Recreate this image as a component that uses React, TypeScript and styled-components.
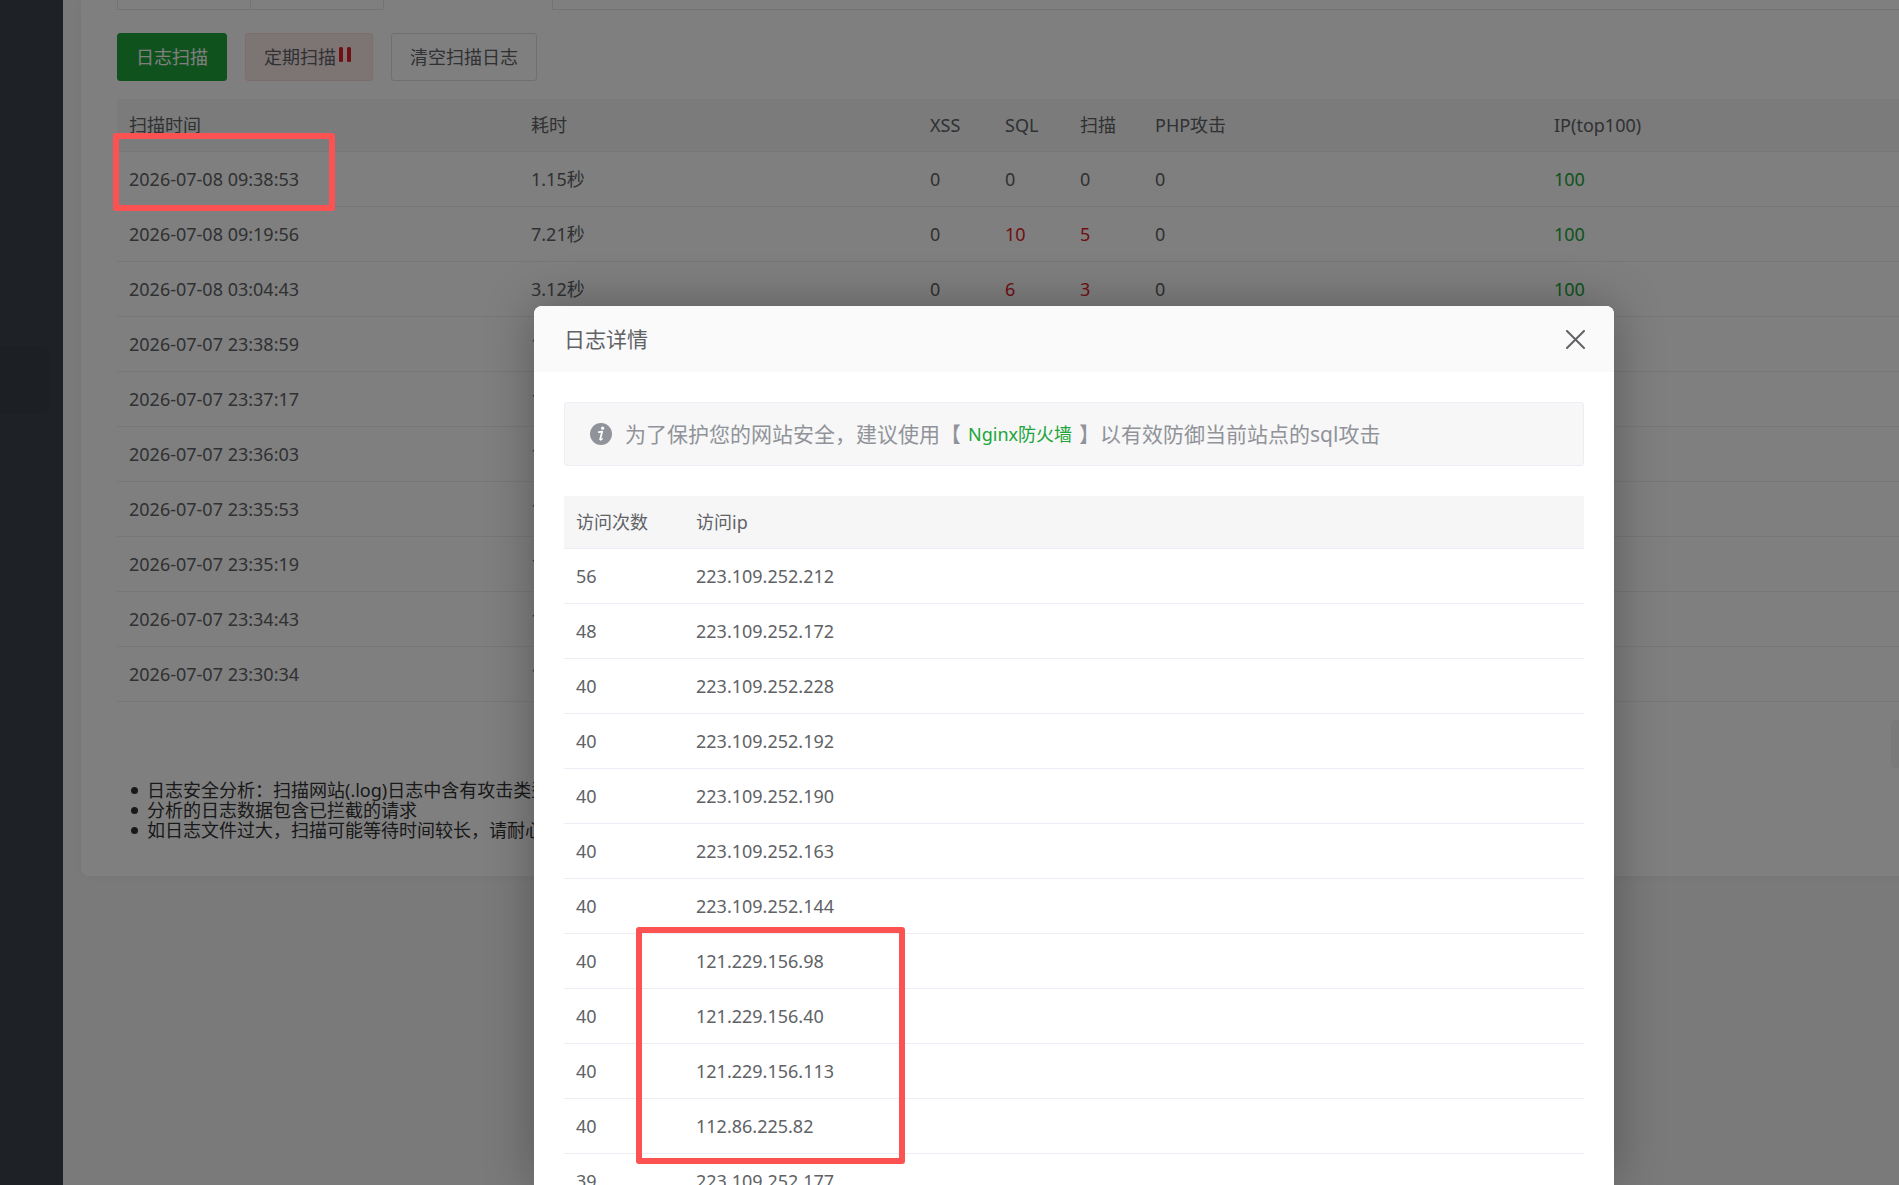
import React from "react";
import styled, { createGlobalStyle } from "styled-components";

const GlobalStyle = createGlobalStyle`
  * {
    box-sizing: border-box;
  }
  html, body, #root {
    height: 100%;
  }
  body {
    margin: 0;
    overflow: hidden;
    background: #f5f5f5;
    color: #606266;
    font-family: "Noto Sans", "Noto Sans CJK SC", sans-serif;
    font-size: 18px;
    line-height: 24px;
  }
  button {
    font: inherit;
    cursor: pointer;
  }
`;

const Page = styled.div`
  position: relative;
  display: flex;
  height: 100vh;
  overflow: hidden;
`;

const Sidebar = styled.nav`
  flex: 0 0 63px;
  padding-top: 346px;
  background: #3c434c;
`;

const SidebarItem = styled.a`
  display: block;
  height: 68px;
  margin-right: 14px;
  border-radius: 0 8px 8px 0;
  background: #394048;
`;

const Main = styled.main`
  flex: 1;
  min-width: 0;
  padding-left: 18px;
`;

const Panel = styled.section`
  margin-right: -24px;
  padding: 0 0 36px 36px;
  border-radius: 0 0 0 8px;
  background: #fff;
  box-shadow: 0 0 12px rgba(0, 0, 0, 0.05);
`;

const Tabs = styled.div`
  display: flex;
  height: 10px;
  margin-bottom: 23px;
`;

const Tab = styled.div<{ $width: number; $active?: boolean }>`
  width: ${(p) => p.$width}px;
  border-left: 1px solid #e4e7ed;
  border-bottom: 1px solid ${(p) => (p.$active ? "transparent" : "#e4e7ed")};
`;

const TabRest = styled.div`
  flex: 1;
  border-left: 1px solid #e4e7ed;
  border-bottom: 1px solid #e4e7ed;
`;

const Toolbar = styled.div`
  display: flex;
  gap: 18px;
  margin-bottom: 18px;
`;

const tones = {
  primary: { bg: "#20a53a", border: "#20a53a", color: "#fff" },
  danger: { bg: "#fbe9e9", border: "#fadcdc", color: "#606266" },
  plain: { bg: "#fff", border: "#dcdfe6", color: "#606266" },
};

const Button = styled.button<{ $tone: keyof typeof tones }>`
  display: flex;
  align-items: center;
  height: 48px;
  padding: 0 18px;
  border: 1px solid ${(p) => tones[p.$tone].border};
  border-radius: 3px;
  background: ${(p) => tones[p.$tone].bg};
  color: ${(p) => tones[p.$tone].color};
`;

const PauseIcon = styled.svg`
  width: 18px;
  height: 18px;
  margin-bottom: 4px;
  fill: #e0202a;
`;

const Table = styled.table`
  width: 100%;
  border-collapse: separate;
  border-spacing: 0;
  table-layout: fixed;
`;

const HeadCell = styled.th`
  height: 53px;
  padding: 0 12px;
  border-bottom: 1px solid #ebeef5;
  background: #f6f6f6;
  font-weight: 400;
  text-align: left;
  white-space: nowrap;
`;

const Cell = styled.td<{ $color?: string }>`
  height: 55px;
  padding: 0 12px;
  border-bottom: 1px solid #ebeef5;
  color: ${(p) => p.$color ?? "inherit"};
  white-space: nowrap;
`;

const CellLink = styled.a`
  color: #20a53a;
  text-decoration: none;
`;

const Pager = styled.div`
  display: flex;
  justify-content: flex-end;
  padding-top: 18px;
`;

const PagerButton = styled.button`
  width: 32px;
  height: 48px;
  border: 0;
  border-radius: 4px;
  background: #f4f4f5;
`;

const Notes = styled.ul`
  margin: 12px 0 0;
  padding-left: 14px;
  color: #333;
  line-height: 20px;
  list-style: none;
  white-space: nowrap;
`;

const Note = styled.li`
  display: flex;
  align-items: center;
  gap: 9px;

  &::before {
    content: "";
    width: 7px;
    height: 7px;
    border-radius: 50%;
    background: #333;
  }
`;

const Mask = styled.div`
  position: absolute;
  inset: 0;
  display: flex;
  padding: 306px 285px 0 534px;
  background: rgba(0, 0, 0, 0.5);
`;

const Dialog = styled.div`
  flex: 1;
  min-width: 0;
  border-radius: 8px 8px 0 0;
  background: #fff;
  box-shadow: 0 0 50px rgba(0, 0, 0, 0.3);
`;

const DialogHeader = styled.header`
  display: flex;
  align-items: center;
  justify-content: space-between;
  height: 66px;
  padding: 0 29px 0 30px;
  border-radius: 8px 8px 0 0;
  background: #fafafa;
`;

const DialogTitle = styled.h2`
  margin: 0;
  font-size: 21px;
  font-weight: 400;
`;

const CloseButton = styled.button`
  display: flex;
  padding: 0;
  border: 0;
  background: none;
  color: #606266;
`;

const DialogBody = styled.div`
  padding: 30px;
`;

const Alert = styled.div`
  display: flex;
  align-items: center;
  height: 64px;
  margin-bottom: 30px;
  padding: 0 25px;
  border: 1px solid #ebeef5;
  border-radius: 3px;
  background: #f7f7f7;
  color: #909399;
  font-size: 21px;
  white-space: nowrap;
`;

const InfoIcon = styled.svg`
  width: 22px;
  height: 22px;
  margin-right: 13px;
`;

const AlertLink = styled.a`
  padding: 0 7px;
  color: #20a53a;
  font-size: 18px;
  text-decoration: none;
`;

const Marker = styled.div<{ $x: number; $y: number; $w: number; $h: number }>`
  position: absolute;
  left: ${(p) => p.$x}px;
  top: ${(p) => p.$y}px;
  width: ${(p) => p.$w}px;
  height: ${(p) => p.$h}px;
  border: 6px solid #fd5252;
  border-radius: 3px;
  pointer-events: none;
`;

const scans = [
  { time: "2026-07-08 09:38:53", cost: "1.15秒", sql: 0, scan: 0 },
  { time: "2026-07-08 09:19:56", cost: "7.21秒", sql: 10, scan: 5 },
  { time: "2026-07-08 03:04:43", cost: "3.12秒", sql: 6, scan: 3 },
  { time: "2026-07-07 23:38:59", cost: "1秒", sql: 0, scan: 0 },
  { time: "2026-07-07 23:37:17", cost: "1秒", sql: 0, scan: 0 },
  { time: "2026-07-07 23:36:03", cost: "1秒", sql: 0, scan: 0 },
  { time: "2026-07-07 23:35:53", cost: "1秒", sql: 0, scan: 0 },
  { time: "2026-07-07 23:35:19", cost: "1秒", sql: 0, scan: 0 },
  { time: "2026-07-07 23:34:43", cost: "1秒", sql: 0, scan: 0 },
  { time: "2026-07-07 23:30:34", cost: "1秒", sql: 0, scan: 0 },
];

const visits: [number, string][] = [
  [56, "223.109.252.212"],
  [48, "223.109.252.172"],
  [40, "223.109.252.228"],
  [40, "223.109.252.192"],
  [40, "223.109.252.190"],
  [40, "223.109.252.163"],
  [40, "223.109.252.144"],
  [40, "121.229.156.98"],
  [40, "121.229.156.40"],
  [40, "121.229.156.113"],
  [40, "112.86.225.82"],
  [39, "223.109.252.177"],
];

const Count = ({ value }: { value: number }) => (
  <Cell $color={value > 0 ? "#e0202a" : undefined}>{value}</Cell>
);

export default function App() {
  return (
    <Page>
      <GlobalStyle />
      <Sidebar>
        <SidebarItem href="#" />
      </Sidebar>
      <Main>
        <Panel>
          <Tabs>
            <Tab $width={133} />
            <Tab $width={133} />
            <Tab $width={169} $active />
            <TabRest />
          </Tabs>
          <Toolbar>
            <Button $tone="primary">日志扫描</Button>
            <Button $tone="danger">
              定期扫描
              <PauseIcon viewBox="0 0 18 18">
                <rect x="3" y="1" width="4" height="15" rx="1.5" />
                <rect x="11" y="1" width="4" height="15" rx="1.5" />
              </PauseIcon>
            </Button>
            <Button $tone="plain">清空扫描日志</Button>
          </Toolbar>
          <Table>
            <colgroup>
              <col width={402} />
              <col width={399} />
              <col width={75} />
              <col width={75} />
              <col width={75} />
              <col width={399} />
              <col />
            </colgroup>
            <thead>
              <tr>
                <HeadCell>扫描时间</HeadCell>
                <HeadCell>耗时</HeadCell>
                <HeadCell>XSS</HeadCell>
                <HeadCell>SQL</HeadCell>
                <HeadCell>扫描</HeadCell>
                <HeadCell>PHP攻击</HeadCell>
                <HeadCell>IP(top100)</HeadCell>
              </tr>
            </thead>
            <tbody>
              {scans.map((s) => (
                <tr key={s.time}>
                  <Cell>{s.time}</Cell>
                  <Cell>{s.cost}</Cell>
                  <Count value={0} />
                  <Count value={s.sql} />
                  <Count value={s.scan} />
                  <Count value={0} />
                  <Cell>
                    <CellLink href="#">100</CellLink>
                  </Cell>
                </tr>
              ))}
            </tbody>
          </Table>
          <Pager>
            <PagerButton aria-label="上一页" />
          </Pager>
          <Notes>
            <Note>日志安全分析：扫描网站(.log)日志中含有攻击类型的请求</Note>
            <Note>分析的日志数据包含已拦截的请求</Note>
            <Note>如日志文件过大，扫描可能等待时间较长，请耐心等待</Note>
          </Notes>
        </Panel>
      </Main>
      <Mask>
        <Dialog role="dialog" aria-labelledby="dialog-title">
          <DialogHeader>
            <DialogTitle id="dialog-title">日志详情</DialogTitle>
            <CloseButton aria-label="关闭">
              <svg width="19" height="19" viewBox="0 0 19 19" fill="none" stroke="currentColor" strokeWidth="2" strokeLinecap="round">
                <path d="M1 1L18 18M18 1L1 18" />
              </svg>
            </CloseButton>
          </DialogHeader>
          <DialogBody>
            <Alert>
              <InfoIcon viewBox="0 0 22 22">
                <circle cx="11" cy="11" r="11" fill="#909399" />
                <circle cx="12.6" cy="5.2" r="1.6" fill="#fff" />
                <path
                  d="M8.8 9.2L12.2 8.6L10.2 16.200"
                  fill="none"
                  stroke="#fff"
                  strokeWidth="1.8"
                  strokeLinecap="round"
                  strokeLinejoin="round"
                />
                <path
                  d="M10.200 16.200c-.2 1.400 1.200.9 2.200-.5"
                  fill="none"
                  stroke="#fff"
                  strokeWidth="1.2"
                  strokeLinecap="round"
                />
              </InfoIcon>
              <span>为了保护您的网站安全，建议使用【</span>
              <AlertLink href="#">Nginx防火墙</AlertLink>
              <span>】以有效防御当前站点的sql攻击</span>
            </Alert>
            <Table>
              <colgroup>
                <col width={120} />
                <col />
              </colgroup>
              <thead>
                <tr>
                  <HeadCell>访问次数</HeadCell>
                  <HeadCell>访问ip</HeadCell>
                </tr>
              </thead>
              <tbody>
                {visits.map(([count, ip]) => (
                  <tr key={ip}>
                    <Cell>{count}</Cell>
                    <Cell>{ip}</Cell>
                  </tr>
                ))}
              </tbody>
            </Table>
          </DialogBody>
        </Dialog>
      </Mask>
      <Marker $x={113} $y={133} $w={222} $h={78} />
      <Marker $x={636} $y={927} $w={269} $h={237} />
    </Page>
  );
}
